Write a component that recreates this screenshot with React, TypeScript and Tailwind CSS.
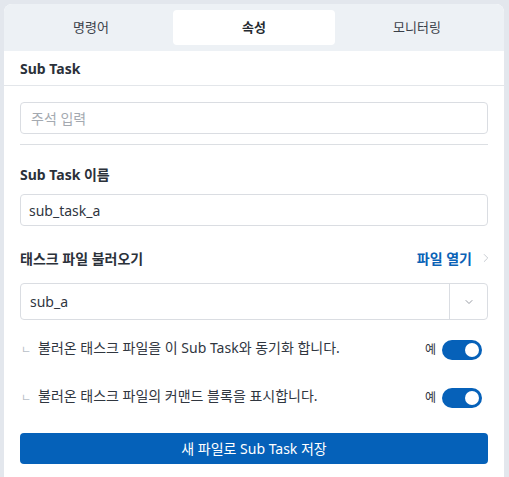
import React, { useState } from 'react';
import { ChevronDown, ChevronRight } from 'lucide-react';

const font = { fontFamily: '"Noto Sans", "Noto Sans CJK KR", sans-serif' };

const Toggle: React.FC<{ on: boolean; onChange: () => void }> = ({ on, onChange }) => (
  <button
    onClick={onChange}
    className={`relative w-[40px] h-[20px] rounded-full ${on ? 'bg-[#0661b9]' : 'bg-gray-300'}`}
  >
    <span
      className={`absolute top-[3px] w-[14px] h-[14px] rounded-full bg-white ${on ? 'left-[23px]' : 'left-[3px]'}`}
    />
  </button>
);

const SubRow: React.FC<{ label: string; on: boolean; onChange: () => void }> = ({ label, on, onChange }) => (
  <div className="flex items-center h-[26px]">
    <span className="w-[18px] pl-[1px] text-[#b8bec7] text-[11px] leading-none -mt-[2px]">ㄴ</span>
    <span className="flex-1 text-[14px] text-[#30363f] -mt-[5px]">{label}</span>
    <span className="text-[12px] text-[#30363f] mr-[6px]">예</span>
    <Toggle on={on} onChange={onChange} />
    <span className="w-[6px]" />
  </div>
);

export default function App() {
  const [tab, setTab] = useState(1);
  const [sync, setSync] = useState(true);
  const [show, setShow] = useState(true);
  const tabs = ['명령어', '속성', '모니터링'];

  return (
    <div className="w-[509px] h-[477px] bg-[#e3e7ed] pt-[4px] pl-[4px] overflow-hidden" style={font}>
      <div className="w-[500px] h-[473px] bg-white rounded-t-[8px] overflow-hidden">
        {/* Tabs */}
        <div className="bg-[#edf1f5] h-[47px] px-[6px] pt-[6px] grid grid-cols-3 gap-[1px]">
          {tabs.map((t, i) => (
            <button
              key={t}
              onClick={() => setTab(i)}
              className={`h-[35px] rounded-[4px] text-[13px] ${
                tab === i ? 'bg-white font-bold text-[#252a31]' : 'text-[#3a4049]'
              }`}
            >
              {t}
            </button>
          ))}
        </div>

        {/* Header */}
        <div className="h-[35px] border-b border-[#e3e6ea] px-[16px] flex items-center">
          <span className="text-[14px] font-bold text-[#2b313a]">Sub Task</span>
        </div>

        <div className="px-[16px] pt-[16px]">
          <input
            placeholder="주석 입력"
            className="w-[468px] h-[32px] border border-[#dadde2] rounded-[4px] px-[10px] text-[14px] text-[#30363f] placeholder:text-[#a4a9b0] outline-none"
          />
          <div className="h-px bg-[#dcdfe3] mt-[10px]" />

          <div className="mt-[20px] text-[14px] font-bold text-[#2b313a] leading-[20px]">Sub Task 이름</div>
          <input
            defaultValue="sub_task_a"
            className="mt-[9px] w-[468px] h-[32px] border border-[#dadde2] rounded-[4px] px-[8px] text-[14px] text-[#30363f] outline-none"
          />

          <div className="mt-[21px] flex items-center justify-between h-[22px]">
            <span className="text-[14px] font-bold text-[#2b313a]">태스크 파일 불러오기</span>
            <span className="flex items-center gap-[7px]">
              <span className="text-[14px] font-bold text-[#0a62b6]">파일 열기</span>
              <ChevronRight size={14} strokeWidth={1.5} className="text-[#c0c5cc] -mr-[5px]" />
            </span>
          </div>

          <div className="mt-[14px] w-[468px] h-[37px] border border-[#dadde2] rounded-[4px] flex items-center">
            <span className="flex-1 px-[9px] text-[14px] text-[#30363f]">sub_a</span>
            <span className="w-[38px] h-full border-l border-[#dadde2] flex items-center justify-center">
              <ChevronDown size={12} strokeWidth={1.8} className="text-[#8c919a]" />
            </span>
          </div>

          <div className="mt-[17px] flex flex-col gap-[22px]">
            <SubRow label="불러온 태스크 파일을 이 Sub Task와 동기화 합니다." on={sync} onChange={() => setSync(!sync)} />
            <SubRow label="불러온 태스크 파일의 커맨드 블록을 표시합니다." on={show} onChange={() => setShow(!show)} />
          </div>

          <button className="mt-[22px] w-[468px] h-[31px] rounded-[4px] bg-[#0561b9] text-white text-[14px]">
            새 파일로 Sub Task 저장
          </button>
        </div>
      </div>
    </div>
  );
}
